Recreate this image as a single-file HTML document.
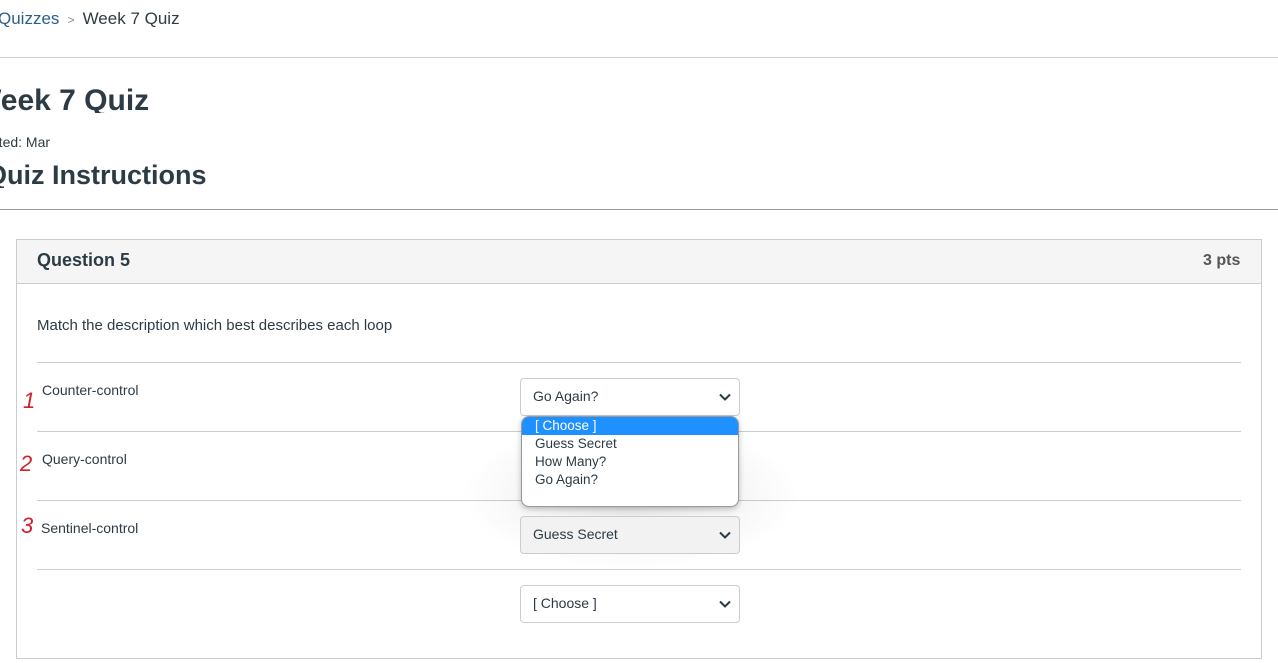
<!DOCTYPE html>
<html><head><style>
*{margin:0;padding:0;box-sizing:border-box}
body{width:1278px;height:663px;overflow:hidden;background:#fff;font-family:"Liberation Sans",sans-serif;color:#2d3b45;position:relative}
.a{position:absolute;white-space:nowrap}
.hr{position:absolute;height:1px;background:#c7cdd1}
.sel{position:absolute;left:520px;width:220px;height:38px;border:1px solid #c7cdd1;border-radius:4px;background:#fff;font-size:14px;padding:9px 12px;color:#2d3b45}
.sel svg{position:absolute;right:8px;top:14px}
</style></head><body>
<div class="a" style="left:-2px;top:9px;font-size:17px;color:#2d3b45"><span style="color:#2b5f8a">Quizzes</span> <span style="color:#888;font-size:12px">&nbsp;&gt;&nbsp;</span> Week 7 Quiz</div>
<div class="hr" style="left:0;top:57px;width:1278px"></div>
<div class="a" style="left:-27px;top:84px;font-size:30px;font-weight:bold;color:#2d3b45;height:29px;overflow:hidden">Week 7 Quiz</div>
<div class="a" style="left:-27px;top:134px;font-size:14px">Started: Mar</div>
<div class="a" style="left:-14px;top:160px;font-size:27px;font-weight:bold;height:28px;overflow:hidden">Quiz Instructions</div>
<div class="hr" style="left:0;top:209px;width:1278px;background:#999"></div>

<div style="position:absolute;left:16px;top:239px;width:1246px;height:420px;border:1px solid #c7cdd1"></div>
<div style="position:absolute;left:17px;top:240px;width:1244px;height:44px;background:#f5f5f5;border-bottom:1px solid #c7cdd1"></div>
<div class="a" style="left:37px;top:250px;font-size:18px;font-weight:bold">Question 5</div>
<div class="a" style="left:1203px;top:252px;font-size:16px;font-weight:bold;color:#555">3 pts</div>
<div class="a" style="left:37px;top:317px;font-size:15px">Match the description which best describes each loop</div>
<div class="hr" style="left:37px;top:362px;width:1204px"></div>
<div class="hr" style="left:37px;top:431px;width:1204px"></div>
<div class="hr" style="left:37px;top:500px;width:1204px"></div>
<div class="hr" style="left:37px;top:569px;width:1204px"></div>
<div class="a" style="left:42px;top:382px;font-size:14px">Counter-control</div>
<div class="a" style="left:42px;top:451px;font-size:14px">Query-control</div>
<div class="a" style="left:41px;top:520px;font-size:14px">Sentinel-control</div>
<div class="a" style="left:23px;top:388px;font-size:22px;font-style:italic;color:#d0202e">1</div>
<div class="a" style="left:20px;top:451px;font-size:22px;font-style:italic;color:#d0202e">2</div>
<div class="a" style="left:21px;top:513px;font-size:22px;font-style:italic;color:#d0202e">3</div>

<div style="position:absolute;left:460px;top:420px;width:340px;height:150px;background:radial-gradient(ellipse at center,rgba(0,0,0,.10),rgba(0,0,0,0) 70%)"></div>
<div class="sel" style="top:378px">Go Again?<svg width="12" height="8" viewBox="0 0 12 8"><path d="M1 1.5L6 6.5L11 1.5" stroke="#2d3b45" stroke-width="2" fill="none"/></svg></div>
<div class="sel" style="top:516px;background:#f2f2f2">Guess Secret<svg width="12" height="8" viewBox="0 0 12 8"><path d="M1 1.5L6 6.5L11 1.5" stroke="#2d3b45" stroke-width="2" fill="none"/></svg></div>
<div class="sel" style="top:585px">[ Choose ]<svg width="12" height="8" viewBox="0 0 12 8"><path d="M1 1.5L6 6.5L11 1.5" stroke="#2d3b45" stroke-width="2" fill="none"/></svg></div>

<div style="position:absolute;left:521px;top:416px;width:218px;height:91px;border:1px solid #999;border-radius:8px;background:#fff;overflow:hidden;box-shadow:0 2px 6px rgba(0,0,0,.25);font-size:13.5px;line-height:18px">
<div style="background:#1e90ff;color:#fff;padding-left:13px;margin-top:0">[ Choose ]</div>
<div style="padding-left:13px">Guess Secret</div>
<div style="padding-left:13px">How Many?</div>
<div style="padding-left:13px">Go Again?</div>
</div>
</body></html>
